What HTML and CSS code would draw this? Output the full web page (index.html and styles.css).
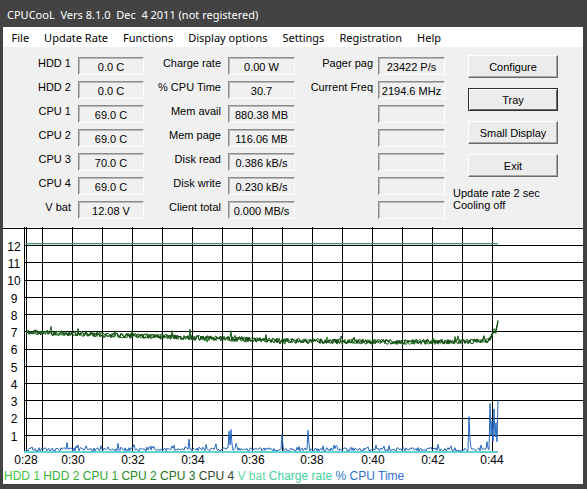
FILE: index.html
```html
<!DOCTYPE html>
<html lang="en">
<head>
    <meta charset="UTF-8">
    <title>CPUCooL</title>
    <link rel="stylesheet" href="styles.css">
</head>
<body>
    <div class="titlebar">CPUCooL  Vers 8.1.0  Dec  4 2011 (not registered)</div>
    <div class="frame">
        <!-- Menu -->
        <ul class="menubar">
            <li>File</li>
            <li>Update Rate</li>
            <li>Functions</li>
            <li>Display options</li>
            <li>Settings</li>
            <li>Registration</li>
            <li>Help</li>
        </ul>

        <!-- Readings + buttons -->
        <div class="panel">
            <div class="readings">
                <span class="label">HDD 1</span><span class="value">0.0 C</span>
                <span class="label">Charge rate</span><span class="value">0.00 W</span>
                <span class="label narrow">Pager pag</span><span class="value">23422 P/s</span>

                <span class="label">HDD 2</span><span class="value">0.0 C</span>
                <span class="label">% CPU Time</span><span class="value">30.7</span>
                <span class="label narrow">Current Freq</span><span class="value">2194.6 MHz</span>

                <span class="label">CPU 1</span><span class="value">69.0 C</span>
                <span class="label">Mem avail</span><span class="value">880.38 MB</span>
                <span class="label narrow"></span><span class="value"></span>

                <span class="label">CPU 2</span><span class="value">69.0 C</span>
                <span class="label">Mem page</span><span class="value">116.06 MB</span>
                <span class="label narrow"></span><span class="value"></span>

                <span class="label">CPU 3</span><span class="value">70.0 C</span>
                <span class="label">Disk read</span><span class="value">0.386 kB/s</span>
                <span class="label narrow"></span><span class="value"></span>

                <span class="label">CPU 4</span><span class="value">69.0 C</span>
                <span class="label">Disk write</span><span class="value">0.230 kB/s</span>
                <span class="label narrow"></span><span class="value"></span>

                <span class="label">V bat</span><span class="value">12.08 V</span>
                <span class="label">Client total</span><span class="value">0.000 MB/s</span>
                <span class="label narrow"></span><span class="value"></span>
            </div>
            <div class="controls">
                <button class="btn">Configure</button>
                <button class="btn default">Tray</button>
                <button class="btn">Small Display</button>
                <button class="btn">Exit</button>
                <div class="status">Update rate 2 sec<br>Cooling off</div>
            </div>
        </div>

        <!-- History graph -->
        <div class="graph">
            <svg id="plot" width="580" height="241" viewBox="0 0 580 241">
                <g id="grid"></g>
                <g class="ylabels">
                    <text x="11" y="24">12</text>
                    <text x="11" y="41">11</text>
                    <text x="11" y="58">10</text>
                    <text x="11" y="76">9</text>
                    <text x="11" y="93">8</text>
                    <text x="11" y="110">7</text>
                    <text x="11" y="127">6</text>
                    <text x="11" y="145">5</text>
                    <text x="11" y="162">4</text>
                    <text x="11" y="179">3</text>
                    <text x="11" y="196">2</text>
                    <text x="11" y="214">1</text>
                </g>
                <g class="xlabels">
                    <text x="23" y="237">0:28</text>
                    <text x="70" y="237">0:30</text>
                    <text x="130" y="237">0:32</text>
                    <text x="190" y="237">0:34</text>
                    <text x="250" y="237">0:36</text>
                    <text x="309" y="237">0:38</text>
                    <text x="370" y="237">0:40</text>
                    <text x="430" y="237">0:42</text>
                    <text x="489" y="237">0:44</text>
                </g>
                <g id="series"></g>
            </svg>
            <div class="legend"><span class="c-hdd1">HDD 1</span> <span class="c-hdd2">HDD 2</span> <span class="c-cpu1">CPU 1</span> <span class="c-cpu2">CPU 2</span> <span class="c-cpu3">CPU 3</span> <span class="c-cpu4">CPU 4</span> <span class="c-vbat">V bat</span> <span class="c-charge">Charge rate</span> <span class="c-time">% CPU Time</span></div>
        </div>
    </div>

    <script src="chart.js"></script>
</body>
</html>
```

FILE: styles.css
```css
* {
    margin: 0;
    padding: 0;
    box-sizing: border-box;
}
html, body {
    width: 100%;
    height: 100%;
}
body {
    background: #434343;
    font-family: "Liberation Sans", Arial, sans-serif;
    font-size: 11px;
    color: #000;
}
/* Window chrome */
.titlebar {
    height: 27px;
    line-height: 29px;
    padding-left: 7px;
    color: #fff;
    font-family: "Noto Sans", sans-serif;
    font-size: 11px;
    white-space: pre;
}
.frame {
    margin: 0 4px 5px 3px;
}
.menubar {
    display: flex;
    list-style: none;
    height: 20px;
    line-height: 21px;
    background: #fff;
    font-family: "Noto Sans", sans-serif;
    font-size: 11px;
    padding-left: 1px;
}
.menubar li {
    padding: 0 7.5px;
}
/* Top panel */
.panel {
    display: flex;
    height: 180px;
    background: #f0f0f0;
}
.readings {
    display: grid;
    grid-template-columns: 75px 66px 84px 67px 83px 67px;
    grid-auto-rows: 18px;
    row-gap: 6px;
    padding-top: 10px;
    align-content: start;
}
.label {
    text-align: right;
    padding-right: 7px;
    line-height: 13px;
    white-space: nowrap;
}
.label.narrow {
    padding-right: 5px;
}
.value {
    border: 1px solid;
    border-color: #8c8c8c #fff #fff #8c8c8c;
    box-shadow: inset 1px 1px 0 #b9b9b9;
    text-align: center;
    padding-top: 1px;
    line-height: 16px;
    white-space: nowrap;
    overflow: hidden;
}
.controls {
    display: flex;
    flex-direction: column;
    padding: 8px 0 0 23px;
}
.btn {
    width: 90px;
    height: 23px;
    margin-bottom: 10px;
    background: #ececec;
    border: 1px solid;
    border-color: #fff #6a6a6a #6a6a6a #fff;
    box-shadow: inset -1px -1px 0 #a6a6a6;
    font-family: "Liberation Sans", Arial, sans-serif;
    font-size: 11px;
    color: #000;
}
.btn.default {
    border-color: #2e2e2e;
    box-shadow: inset 1px 1px 0 #fff, inset -1px -1px 0 #6a6a6a;
}
.status {
    margin: 0 0 0 -15px;
    line-height: 12px;
    white-space: nowrap;
}
/* Graph */
.graph {
    height: 257px;
    background: #fff;
}
#plot {
    display: block;
}
#plot text {
    font-family: "Liberation Sans", Arial, sans-serif;
    font-size: 12px;
    fill: #000;
    text-anchor: middle;
}
.legend {
    height: 16px;
    line-height: 16px;
    padding-left: 1px;
    font-size: 12px;
    white-space: nowrap;
}
.c-hdd1 { color: #3fc63f; }
.c-hdd2 { color: #34b034; }
.c-cpu1 { color: #2f9f2f; }
.c-cpu2 { color: #258a25; }
.c-cpu3 { color: #236d23; }
.c-cpu4 { color: #2e4a2e; }
.c-vbat { color: #5fd6a2; }
.c-charge { color: #44cf9c; }
.c-time { color: #2f6fcf; }
```

FILE: chart.js
```js
// Draws the grid and the recorded series into the graph svg
const NS = 'http://www.w3.org/2000/svg';
const BASE = 225;      // y of value 0
const STEP = 17.25;    // px per unit

function el(tag, attrs, parent) {
    const e = document.createElementNS(NS, tag);
    for (const k in attrs) e.setAttribute(k, attrs[k]);
    parent.appendChild(e);
    return e;
}

function rng(seed) {
    return function () {
        seed |= 0; seed = seed + 0x6D2B79F5 | 0;
        let t = Math.imul(seed ^ seed >>> 15, 1 | seed);
        t = t + Math.imul(t ^ t >>> 7, 61 | t) ^ t;
        return ((t ^ t >>> 14) >>> 0) / 4294967296;
    };
}

function lerp(pts, x) {
    for (let i = 1; i < pts.length; i++) {
        if (x <= pts[i][0]) {
            const a = pts[i - 1], b = pts[i];
            return a[1] + (b[1] - a[1]) * (x - a[0]) / (b[0] - a[0]);
        }
    }
    return pts[pts.length - 1][1];
}

const vy = v => BASE - v * STEP;

// grid
const grid = document.getElementById('grid');
for (let v = 1; v <= 13; v++) {
    const y = Math.round(vy(v)) + 0.5;
    el('line', { x1: v === 13 ? 0 : 21, y1: y, x2: 580, y2: y, stroke: '#000' }, grid);
}
for (let k = 0; k < 16; k++) {
    const x = 39.5 + 30 * k;
    el('line', { x1: x, y1: 0, x2: x, y2: BASE, stroke: '#000' }, grid);
}
el('line', { x1: 21.5, y1: 0, x2: 21.5, y2: BASE, stroke: '#000' }, grid);
el('line', { x1: 23.5, y1: 0, x2: 23.5, y2: BASE, stroke: '#000' }, grid);

const series = document.getElementById('series');

// V bat
el('line', { x1: 23, y1: vy(12.08), x2: 495, y2: vy(12.08), stroke: '#3f8f68', 'stroke-width': 1.3 }, series);

// CPU temps (x in svg coords)
const trend = [[23, 6.95], [97, 6.8], [197, 6.62], [277, 6.45], [397, 6.37], [483, 6.42], [488, 6.6], [491, 7.1], [493, 7.0], [495, 7.55]];
const spikes = { 48: 0.25, 169: 0.3, 187: 0.35, 228: 0.4, 338: 0.3, 455: 0.35 };
['#2a7a2a', '#1c5c1c', '#124a12'].forEach((color, i) => {
    const r = rng(11 + i * 7);
    let d = '';
    for (let x = 23; x <= 495; x++) {
        let v = lerp(trend, x) + (r() - 0.5) * 0.3;
        if (spikes[x] && i === 1) v += spikes[x];
        if (r() < 0.05) v += (r() - 0.3) * 0.35;
        d += (x === 23 ? 'M' : 'L') + x + ' ' + vy(v).toFixed(1);
    }
    el('path', { d, fill: 'none', stroke: color, 'stroke-width': 1 }, series);
});

// HDD baseline
el('line', { x1: 21, y1: BASE, x2: 495, y2: BASE, stroke: '#63d3d3', 'stroke-width': 2 }, series);

// CPU time
const peaks = { 64: 0.55, 73: 0.35, 115: 0.5, 169: 0.35, 186: 0.75, 226: 1.2, 228: 1.3, 233: 0.5,
    279: 1.0, 305: 1.25, 381: 0.35, 466: 2.05, 484: 0.6, 487: 2.8, 489: 1.8, 491: 2.5, 493: 1.7, 495: 3.0 };
const rt = rng(5);
let d = '';
for (let x = 23; x <= 495; x++) {
    let v = 0.05 + rt() * 0.2;
    if (rt() < 0.12) v += rt() * 0.25;
    if (peaks[x]) v = peaks[x];
    else if (peaks[x - 1] && peaks[x - 1] > 0.9) v = peaks[x - 1] * 0.35;
    d += (x === 23 ? 'M' : 'L') + x + ' ' + vy(v).toFixed(1);
}
el('path', { d, fill: 'none', stroke: '#2468c0', 'stroke-width': 1 }, series);
```
